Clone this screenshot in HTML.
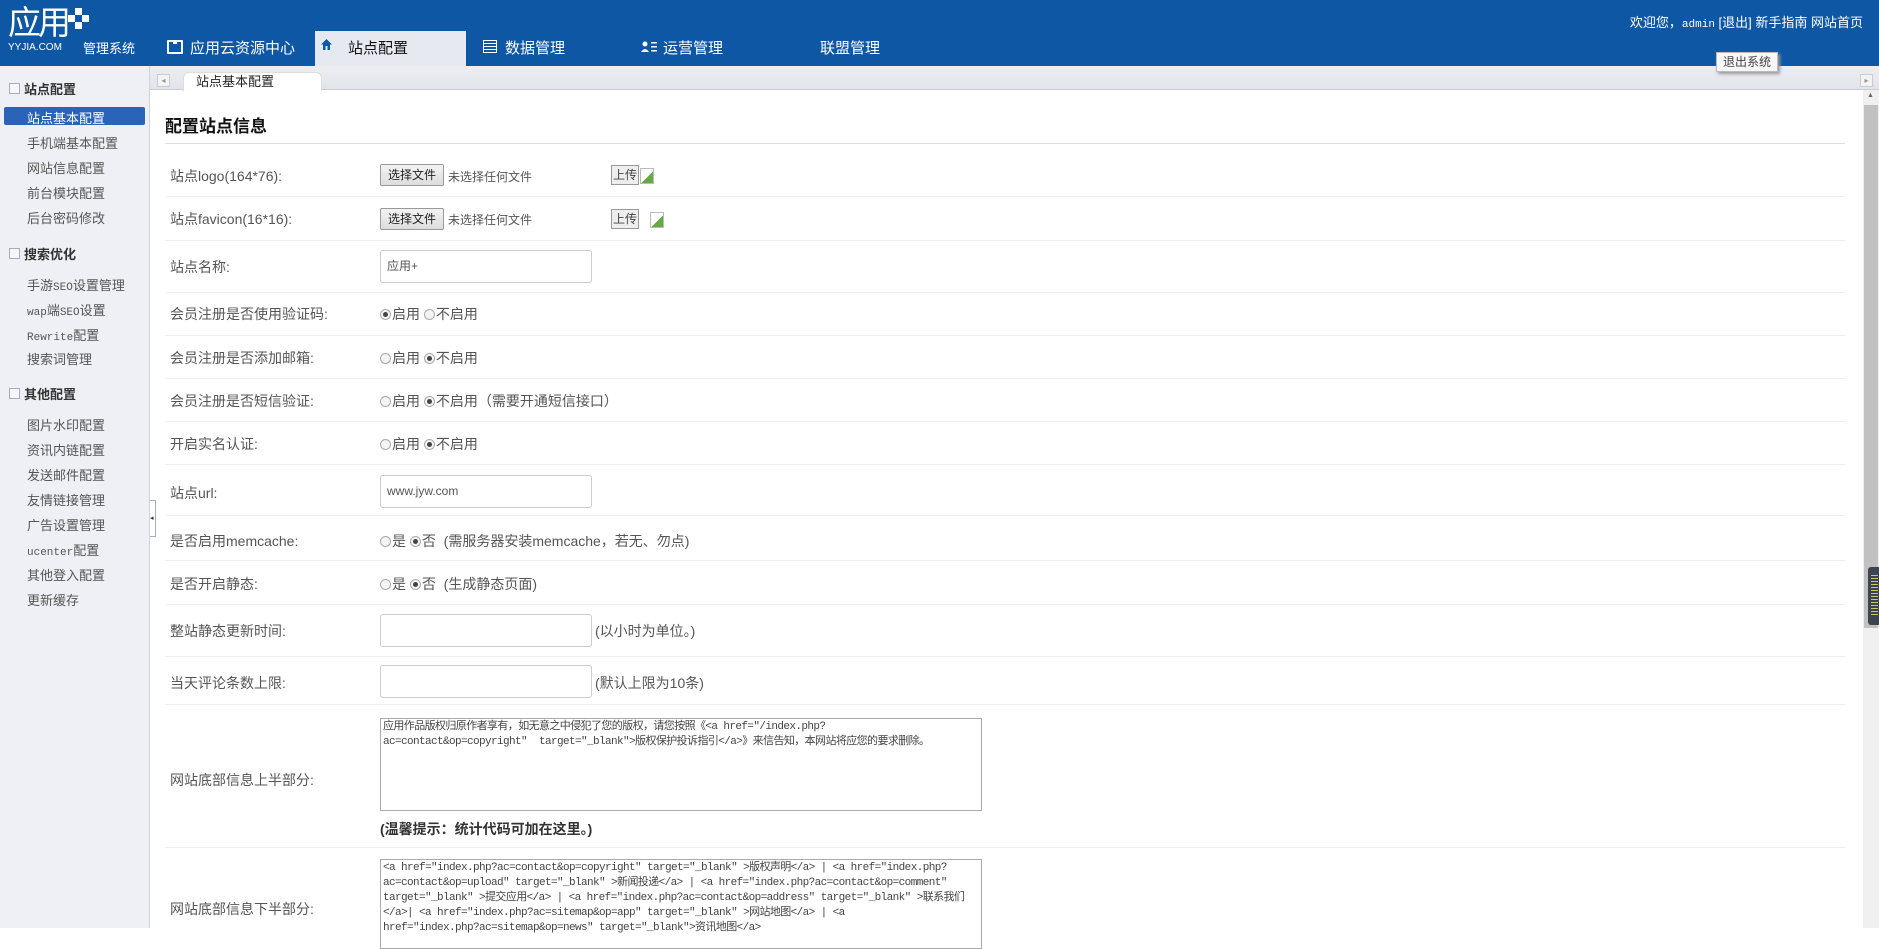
<!DOCTYPE html>
<html><head><meta charset="utf-8">
<style>
*{margin:0;padding:0;box-sizing:border-box}
body{width:1879px;height:928px;overflow:hidden;position:relative;background:#fff;font-family:"Liberation Sans","Noto Sans CJK SC",sans-serif;font-size:13px;color:#555}
.a{position:absolute;white-space:nowrap}
#hd{position:absolute;left:0;top:0;width:1879px;height:66px;background:#0d57a5}
.nav{position:absolute;top:37px;color:#fff;font-size:15px}
#tabbar{position:absolute;left:150px;top:66px;width:1729px;height:24px;background:linear-gradient(#eceef3,#e1e4ea);border-bottom:1px solid #c9ccd4}
#side{position:absolute;left:0;top:66px;width:150px;height:862px;background:#eef0f5;border-right:1px solid #cfd3da}
.sh{position:absolute;left:24px;font-weight:bold;font-size:13px;color:#333}
.sh:before{content:"";position:absolute;left:-15px;top:4px;width:9px;height:9px;border:1px solid #aab;background:#f6f7fa}
.si{position:absolute;left:27px;font-size:13px;color:#555}
.mono{font-family:"Liberation Mono","Noto Sans CJK SC",monospace;font-size:11px}
.lbl{position:absolute;left:170px;font-size:14px;color:#555}
.line{position:absolute;left:165px;width:1680px;height:1px;background:#f0f0f0}
.inp{position:absolute;left:380px;width:212px;height:33px;border:1px solid #ccc;border-radius:3px;background:#fff;padding:0 6px;font-size:12px;line-height:31px;color:#555}
.fb{position:absolute;left:380px;width:64px;height:22px;border:1px solid #999;background:linear-gradient(#f3f3f3,#ddd);font-size:12px;text-align:center;line-height:20px;border-radius:2px;color:#222}
.up{position:absolute;left:611px;width:28px;height:20px;border:1px solid #999;background:#eee;font-size:12px;text-align:center;line-height:18px;color:#444}
.r{display:inline-block;width:11px;height:11px;border:1px solid #aaa;border-radius:50%;background:#f4f4f4;vertical-align:-1px;position:relative;margin-right:1px}
.r.on:after{content:"";position:absolute;left:2px;top:2px;width:5px;height:5px;border-radius:50%;background:#444}
.opt{position:absolute;left:380px;font-size:14px;color:#555}
.ta{position:absolute;left:380px;width:602px;border:1px solid #aaa;background:#fff;padding:1px 2px;font-family:"Liberation Mono","Noto Sans CJK SC",monospace;font-size:11px;letter-spacing:-0.6px;line-height:15px;color:#444;white-space:normal;word-break:break-all;overflow:hidden}
.img{position:absolute;width:14px;height:16px;border:1px solid #bbb;background:linear-gradient(135deg,#fff 55%,#6a4 56%)}
</style></head><body>
<div id="hd">
  <div class="a" style="left:8px;top:6px;color:#fff;font-size:33px;line-height:34px;letter-spacing:-3px">应用</div>
  <div class="a" style="left:68px;top:8px;width:22px;height:22px">
    <div style="position:absolute;left:7px;top:0;width:7px;height:7px;background:#fff"></div>
    <div style="position:absolute;left:0;top:7px;width:7px;height:7px;background:#fff"></div>
    <div style="position:absolute;left:14px;top:7px;width:7px;height:7px;background:#fff"></div>
    <div style="position:absolute;left:7px;top:14px;width:7px;height:7px;background:#fff"></div>
  </div>
  <div class="a" style="left:8px;top:42px;color:#fff;font-size:10px">YYJIA.COM</div>
  <div class="a" style="left:83px;top:38px;color:#fff;font-size:13px">管理系统</div>
  <div class="a" style="left:167px;top:40px;width:16px;height:14px;border:2px solid #fff;border-radius:1px"><div style="position:absolute;left:4px;top:-1px;width:4px;height:3px;background:#fff"></div></div>
  <div class="nav" style="left:190px">应用云资源中心</div>
  <div class="a" style="left:315px;top:31px;width:151px;height:35px;background:#e6e9f0"></div>
  <svg class="a" style="left:320px;top:38px" width="13" height="13" viewBox="0 0 13 13"><path d="M6.5 1 L12 6.5 L10 6.5 L10 12 L3 12 L3 6.5 L1 6.5 Z" fill="#0d57a5"/><rect x="5.5" y="8" width="2" height="4" fill="#e6e9f0"/></svg>
  <div class="nav" style="left:348px;color:#111">站点配置</div>
  <div class="a" style="left:483px;top:40px;width:14px;height:13px;border:1.5px solid #fff;background:repeating-linear-gradient(#0d57a5 0 2px,#fff 2px 3px)"></div>
  <div class="nav" style="left:505px">数据管理</div>
  <svg class="a" style="left:641px;top:41px" width="16" height="12" viewBox="0 0 16 12"><circle cx="4" cy="3" r="2.5" fill="#fff"/><path d="M0 11 Q4 5 8 11Z" fill="#fff"/><rect x="10" y="1" width="6" height="1.5" fill="#fff"/><rect x="10" y="5" width="6" height="1.5" fill="#fff"/><rect x="10" y="9" width="6" height="1.5" fill="#fff"/></svg>
  <div class="nav" style="left:663px">运营管理</div>
  <div class="nav" style="left:820px">联盟管理</div>
  <div class="a" style="right:16px;top:12px;color:#fff;font-size:13px">欢迎您，<span class="mono">admin</span> [退出] 新手指南 网站首页</div>
</div>
<div class="a" style="left:0;top:66px;width:1879px;height:3px;background:#c8dbf0"></div>
<div class="a" style="left:1716px;top:52px;width:62px;height:20px;background:#f7f7f7;border:1px solid #bbb;box-shadow:2px 2px 3px #999;font-size:12px;text-align:center;line-height:18px;color:#444;z-index:5">退出系统</div>
<div id="tabbar"></div>
<div class="a" style="left:157px;top:74px;width:13px;height:13px;border:1px solid #ccc;background:#f3f3f3;font-size:8px;color:#999;text-align:center;line-height:11px">&#9666;</div>
<div class="a" style="left:183px;top:72px;width:139px;height:19px;background:#fff;border:1px solid #ddd;border-bottom:none;border-radius:6px 6px 0 0;font-size:13px;padding-left:12px;line-height:17px;color:#222">站点基本配置</div>
<div class="a" style="left:1860px;top:74px;width:13px;height:13px;border:1px solid #ccc;background:#f3f3f3;font-size:8px;color:#999;text-align:center;line-height:11px">&#9656;</div>
<div id="side">
  <div class="sh" style="top:13px">站点配置</div>
  <div class="a" style="left:4px;top:41px;width:141px;height:18px;background:#2a63b8;border-radius:2px"></div>
  <div class="si" style="top:42px;color:#fff">站点基本配置</div>
  <div class="si" style="top:67px">手机端基本配置</div>
  <div class="si" style="top:92px">网站信息配置</div>
  <div class="si" style="top:117px">前台模块配置</div>
  <div class="si" style="top:142px">后台密码修改</div>
  <div class="sh" style="top:178px">搜索优化</div>
  <div class="si" style="top:209px">手游<span class="mono">SEO</span>设置管理</div>
  <div class="si" style="top:234px"><span class="mono">wap</span>端<span class="mono">SEO</span>设置</div>
  <div class="si" style="top:259px"><span class="mono">Rewrite</span>配置</div>
  <div class="si" style="top:283px">搜索词管理</div>
  <div class="sh" style="top:318px">其他配置</div>
  <div class="si" style="top:349px">图片水印配置</div>
  <div class="si" style="top:374px">资讯内链配置</div>
  <div class="si" style="top:399px">发送邮件配置</div>
  <div class="si" style="top:424px">友情链接管理</div>
  <div class="si" style="top:449px">广告设置管理</div>
  <div class="si" style="top:474px"><span class="mono">ucenter</span>配置</div>
  <div class="si" style="top:499px">其他登入配置</div>
  <div class="si" style="top:524px">更新缓存</div>
</div>
<div class="a" style="left:150px;top:500px;width:6px;height:37px;border:1px solid #aab;border-left:none;background:#fff;font-size:7px;color:#333;line-height:35px">&#9666;</div>

<div class="a" style="left:165px;top:112px;font-size:17px;font-weight:bold;color:#111">配置站点信息</div>
<div class="a" style="left:165px;top:143px;width:1680px;height:1px;background:#ddd"></div>

<div class="lbl" style="top:166px">站点logo(164*76):</div>
<div class="fb" style="top:164px">选择文件</div><div class="a" style="left:448px;top:168px;font-size:12px;color:#555">未选择任何文件</div>
<div class="up" style="top:165px">上传</div><div class="img" style="left:640px;top:168px"></div>
<div class="line" style="top:196px"></div>

<div class="lbl" style="top:209px">站点favicon(16*16):</div>
<div class="fb" style="top:208px">选择文件</div><div class="a" style="left:448px;top:211px;font-size:12px;color:#555">未选择任何文件</div>
<div class="up" style="top:209px">上传</div><div class="img" style="left:650px;top:212px"></div>
<div class="line" style="top:240px"></div>

<div class="lbl" style="top:257px">站点名称:</div>
<div class="inp" style="top:250px">应用+</div>
<div class="line" style="top:292px"></div>

<div class="lbl" style="top:304px">会员注册是否使用验证码:</div>
<div class="opt" style="top:304px"><span class="r on"></span>启用 <span class="r"></span>不启用</div>
<div class="line" style="top:335px"></div>

<div class="lbl" style="top:348px">会员注册是否添加邮箱:</div>
<div class="opt" style="top:348px"><span class="r"></span>启用 <span class="r on"></span>不启用</div>
<div class="line" style="top:378px"></div>

<div class="lbl" style="top:391px">会员注册是否短信验证:</div>
<div class="opt" style="top:391px"><span class="r"></span>启用 <span class="r on"></span>不启用（需要开通短信接口）</div>
<div class="line" style="top:421px"></div>

<div class="lbl" style="top:434px">开启实名认证:</div>
<div class="opt" style="top:434px"><span class="r"></span>启用 <span class="r on"></span>不启用</div>
<div class="line" style="top:464px"></div>

<div class="lbl" style="top:483px">站点url:</div>
<div class="inp" style="top:475px">www.jyw.com</div>
<div class="line" style="top:515px"></div>

<div class="lbl" style="top:531px">是否启用memcache:</div>
<div class="opt" style="top:531px"><span class="r"></span>是 <span class="r on"></span>否 &nbsp;(需服务器安装memcache，若无、勿点)</div>
<div class="line" style="top:560px"></div>

<div class="lbl" style="top:574px">是否开启静态:</div>
<div class="opt" style="top:574px"><span class="r"></span>是 <span class="r on"></span>否 &nbsp;(生成静态页面)</div>
<div class="line" style="top:604px"></div>

<div class="lbl" style="top:621px">整站静态更新时间:</div>
<div class="inp" style="top:614px"></div><div class="a" style="left:595px;top:621px;font-size:14px;color:#555">(以小时为单位。)</div>
<div class="line" style="top:656px"></div>

<div class="lbl" style="top:673px">当天评论条数上限:</div>
<div class="inp" style="top:665px"></div><div class="a" style="left:595px;top:673px;font-size:14px;color:#555">(默认上限为10条)</div>
<div class="line" style="top:704px"></div>

<div class="lbl" style="top:770px">网站底部信息上半部分:</div>
<div class="ta" style="top:718px;height:93px">应用作品版权归原作者享有，如无意之中侵犯了您的版权，请您按照《&lt;a href="/index.php?<br>ac=contact&amp;op=copyright" &nbsp;target="_blank"&gt;版权保护投诉指引&lt;/a&gt;》来信告知，本网站将应您的要求删除。</div>
<div class="a" style="left:380px;top:819px;font-size:14px;font-weight:bold;color:#333">(温馨提示：统计代码可加在这里。)</div>
<div class="line" style="top:847px"></div>

<div class="lbl" style="top:899px">网站底部信息下半部分:</div>
<div class="ta" style="top:859px;height:90px">&lt;a href="index.php?ac=contact&amp;op=copyright" target="_blank" &gt;版权声明&lt;/a&gt; | &lt;a href="index.php?<br>ac=contact&amp;op=upload" target="_blank" &gt;新闻投递&lt;/a&gt; | &lt;a href="index.php?ac=contact&amp;op=comment"<br>target="_blank" &gt;提交应用&lt;/a&gt; | &lt;a href="index.php?ac=contact&amp;op=address" target="_blank" &gt;联系我们<br>&lt;/a&gt;| &lt;a href="index.php?ac=sitemap&amp;op=app" target="_blank" &gt;网站地图&lt;/a&gt; | &lt;a<br>href="index.php?ac=sitemap&amp;op=news" target="_blank"&gt;资讯地图&lt;/a&gt;</div>

<div class="a" style="left:1863px;top:90px;width:16px;height:838px;background:#f0f0f0"></div>
<div class="a" style="left:1867px;top:92px;font-size:7px;color:#666">&#9650;</div>
<div class="a" style="left:1864px;top:105px;width:14px;height:523px;background:#c1c1c1"></div>
<div class="a" style="left:1868px;top:567px;width:11px;height:58px;background:#3b4450;border-radius:3px 0 0 3px"><div style="position:absolute;left:3px;top:8px;width:7px;height:42px;background:repeating-linear-gradient(#c9c86a 0 1px,#3b4450 1px 3px)"></div></div>
</body></html>
